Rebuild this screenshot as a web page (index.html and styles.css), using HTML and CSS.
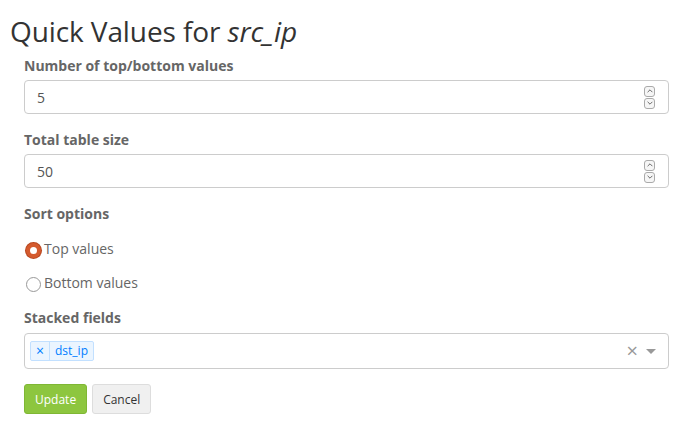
FILE: index.html
```html
<!DOCTYPE html>
<html>
<head>
<meta charset="utf-8">
<link rel="stylesheet" href="styles.css">
</head>
<body>
<h2 class="title">Quick Values for <em>src_ip</em></h2>
<form class="form">
  <div class="group">
    <label class="label">Number of top/bottom values</label>
    <div class="input">
      <span class="value">5</span>
      <span class="spinner">
        <span class="spin"><svg viewBox="0 0 10 10" width="8" height="8"><path d="M2 6.5 L5 3.5 L8 6.5" fill="none" stroke="#666" stroke-width="1.2"/></svg></span>
        <span class="spin"><svg viewBox="0 0 10 10" width="8" height="8"><path d="M2 3.5 L5 6.5 L8 3.5" fill="none" stroke="#666" stroke-width="1.2"/></svg></span>
      </span>
    </div>
  </div>
  <div class="group">
    <label class="label">Total table size</label>
    <div class="input">
      <span class="value">50</span>
      <span class="spinner">
        <span class="spin"><svg viewBox="0 0 10 10" width="8" height="8"><path d="M2 6.5 L5 3.5 L8 6.5" fill="none" stroke="#666" stroke-width="1.2"/></svg></span>
        <span class="spin"><svg viewBox="0 0 10 10" width="8" height="8"><path d="M2 3.5 L5 6.5 L8 3.5" fill="none" stroke="#666" stroke-width="1.2"/></svg></span>
      </span>
    </div>
  </div>
  <div class="group">
    <label class="label">Sort options</label>
    <div class="radio"><span class="dot checked"></span>Top values</div>
    <div class="radio"><span class="dot"></span>Bottom values</div>
  </div>
  <div class="group group-last">
    <label class="label label-select">Stacked fields</label>
    <div class="select">
      <span class="tag"><span class="tag-x">×</span><span class="tag-label">dst_ip</span></span>
      <span class="select-tools">
        <span class="clear">×</span>
        <span class="arrow"></span>
      </span>
    </div>
  </div>
  <div class="buttons">
    <button type="button" class="btn btn-success">Update</button>
    <button type="button" class="btn btn-default">Cancel</button>
  </div>
</form>
</body>
</html>
```

FILE: styles.css
```css
html, body {
  margin: 0;
  padding: 0;
  background: #fff;
  font-family: "Open Sans", "DejaVu Sans", sans-serif;
  color: #666;
}

.title {
  margin: 14px 0 0 10px;
  font-size: 28px;
  font-weight: 400;
  line-height: 34px;
  color: #333;
  letter-spacing: -0.1px;
}

.title em {
  font-style: italic;
}

.form {
  padding: 0 18px 0 24px;
  margin-top: 8px;
}

.group {
  margin-bottom: 16px;
}

.group-last {
  margin-bottom: 15px;
}

.label {
  display: block;
  font-size: 14px;
  font-weight: 700;
  line-height: 20px;
  color: #666;
  margin-bottom: 4px;
}

.label-select {
  margin-bottom: 5px;
}

.input {
  height: 34px;
  box-sizing: border-box;
  border: 1px solid #ccc;
  border-radius: 4px;
  display: flex;
  align-items: center;
  justify-content: space-between;
  padding: 0 13px 0 12px;
  font-size: 14px;
  color: #555;
}

.spinner {
  display: flex;
  flex-direction: column;
  gap: 1px;
}

.spin {
  width: 11px;
  height: 11px;
  box-sizing: border-box;
  border: 1px solid #aaa;
  border-radius: 3px;
  display: flex;
  align-items: center;
  justify-content: center;
  background: #f6f6f6;
}

.spin svg {
  display: block;
}

.radio {
  display: flex;
  align-items: center;
  font-size: 14px;
  color: #666;
  height: 20px;
  margin-top: 14px;
}

.dot {
  width: 15px;
  height: 15px;
  box-sizing: border-box;
  border-radius: 50%;
  border: 1px solid #999;
  margin: 4px 3px 0 2px;
  background: #fff;
}

.dot.checked {
  border: 4px solid #d45a2e;
  background: #fff;
  box-shadow: 0 0 0 1px #b8471f;
}

.select {
  height: 36px;
  box-sizing: border-box;
  border: 1px solid #ccc;
  border-radius: 4px;
  display: flex;
  align-items: center;
  justify-content: space-between;
  padding: 0 12px 0 5px;
}

.tag {
  display: flex;
  align-items: stretch;
  height: 20px;
  box-sizing: border-box;
  border: 1px solid #c2e0ff;
  background: #ebf5ff;
  border-radius: 2px;
  color: #007eff;
  font-size: 12px;
  line-height: 18px;
}

.tag-x {
  padding: 0 5px;
  border-right: 1px solid #c2e0ff;
  font-size: 14px;
}

.tag-label {
  padding: 0 5px;
}

.select-tools {
  display: flex;
  align-items: center;
  gap: 8px;
}

.clear {
  font-size: 20px;
  color: #999;
  line-height: 20px;
}

.arrow {
  width: 0;
  height: 0;
  border-left: 5px solid transparent;
  border-right: 5px solid transparent;
  border-top: 5px solid #999;
}

.buttons {
  display: flex;
  gap: 5px;
  margin-top: 0;
}

.btn {
  font-family: "Open Sans", "DejaVu Sans", sans-serif;
  font-size: 12px;
  height: 30px;
  padding: 0 10px;
  border-radius: 3px;
  cursor: pointer;
}

.btn-success {
  background: #8dc63f;
  border: 1px solid #7fb734;
  color: #fff;
}

.btn-default {
  background: #f0f0f0;
  border: 1px solid #ddd;
  color: #333;
}
```
